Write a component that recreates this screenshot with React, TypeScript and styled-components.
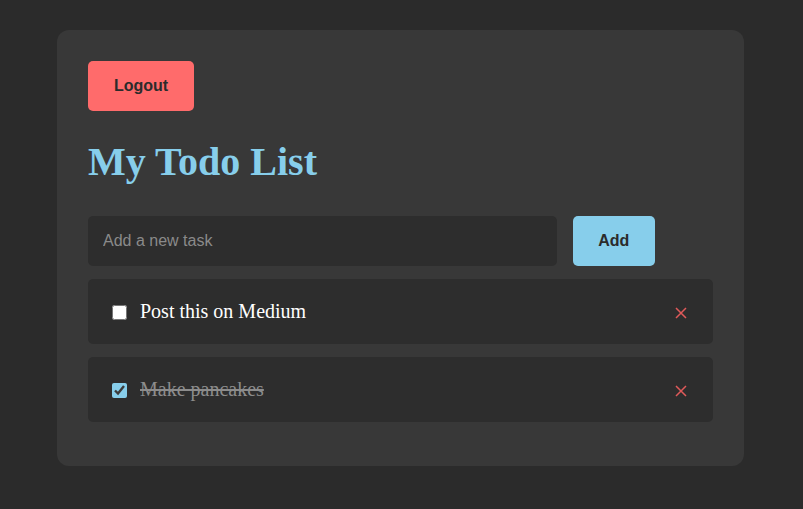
import React from "react";
import styled, { createGlobalStyle } from "styled-components";

const GlobalStyle = createGlobalStyle`
  html, body {
    margin: 0;
    padding: 0;
    background: #2b2b2b;
  }
  body {
    font-family: "Liberation Serif", "Times New Roman", serif;
  }
`;

const Page = styled.div`
  min-height: 509px;
  padding: 30px 59px 0 57px;
  box-sizing: border-box;
`;

const Card = styled.div`
  width: 687px;
  box-sizing: border-box;
  background: #383838;
  border-radius: 12px;
  padding: 31px 31px 44px;
`;

const ActionButton = styled.button<{ $tone: "danger" | "primary" }>`
  border: none;
  border-radius: 5px;
  height: 50px;
  width: ${(p) => (p.$tone === "danger" ? 106 : 82)}px;
  padding: 0;
  font-family: "Liberation Sans", Arial, sans-serif;
  font-size: 16px;
  font-weight: bold;
  color: #2b2b2b;
  background: ${(p) => (p.$tone === "danger" ? "#ff6b6b" : "#87ceeb")};
  cursor: pointer;
`;

const Title = styled.h1`
  margin: 25px 0 28px;
  font-family: "Liberation Serif", "Times New Roman", serif;
  font-size: 40px;
  line-height: 52px;
  font-weight: bold;
  color: #87ceeb;
`;

const AddForm = styled.form`
  display: flex;
  gap: 16px;
  margin-bottom: 13px;
`;

const TaskInput = styled.input`
  width: 75%;
  height: 50px;
  box-sizing: border-box;
  border: none;
  border-radius: 5px;
  background: #2d2d2d;
  padding: 0 15px;
  font-family: "Liberation Sans", Arial, sans-serif;
  font-size: 16px;
  color: #eee;
  outline: none;
  &::placeholder {
    color: #8a8a8a;
  }
`;

const List = styled.ul`
  list-style: none;
  margin: 0;
  padding: 0;
  display: flex;
  flex-direction: column;
  gap: 13px;
`;

const Item = styled.li`
  display: flex;
  align-items: center;
  height: 65px;
  box-sizing: border-box;
  padding: 0 20px;
  background: #2d2d2d;
  border-radius: 5px;
`;

const Check = styled.input`
  margin: 2px 0 0 4px;
  width: 15px;
  height: 15px;
  accent-color: #87ceeb;
`;

const TaskText = styled.span<{ $done: boolean }>`
  flex: 1;
  margin-left: 13px;
  font-size: 20px;
  color: ${(p) => (p.$done ? "#8c8c8c" : "#ffffff")};
  text-decoration: ${(p) => (p.$done ? "line-through" : "none")};
`;

const RemoveButton = styled.button`
  border: none;
  background: none;
  padding: 0;
  margin: 3px 5px 0 0;
  width: 14px;
  height: 14px;
  display: flex;
  align-items: center;
  justify-content: center;
  cursor: pointer;
`;

const tasks = [
  { id: 1, text: "Post this on Medium", done: false },
  { id: 2, text: "Make pancakes", done: true },
];

export default function App() {
  return (
    <>
      <GlobalStyle />
      <Page>
        <Card>
          <ActionButton $tone="danger">Logout</ActionButton>
          <Title>My Todo List</Title>
          <AddForm onSubmit={(e) => e.preventDefault()}>
            <TaskInput placeholder="Add a new task" />
            <ActionButton $tone="primary" type="submit">
              Add
            </ActionButton>
          </AddForm>
          <List>
            {tasks.map((t) => (
              <Item key={t.id}>
                <Check type="checkbox" defaultChecked={t.done} />
                <TaskText $done={t.done}>{t.text}</TaskText>
                <RemoveButton aria-label="Delete">
                  <svg width="12" height="12" viewBox="0 0 12 12">
                    <path d="M1 1 L11 11 M11 1 L1 11" stroke="#e05a5a" strokeWidth="1.5" />
                  </svg>
                </RemoveButton>
              </Item>
            ))}
          </List>
        </Card>
      </Page>
    </>
  );
}
